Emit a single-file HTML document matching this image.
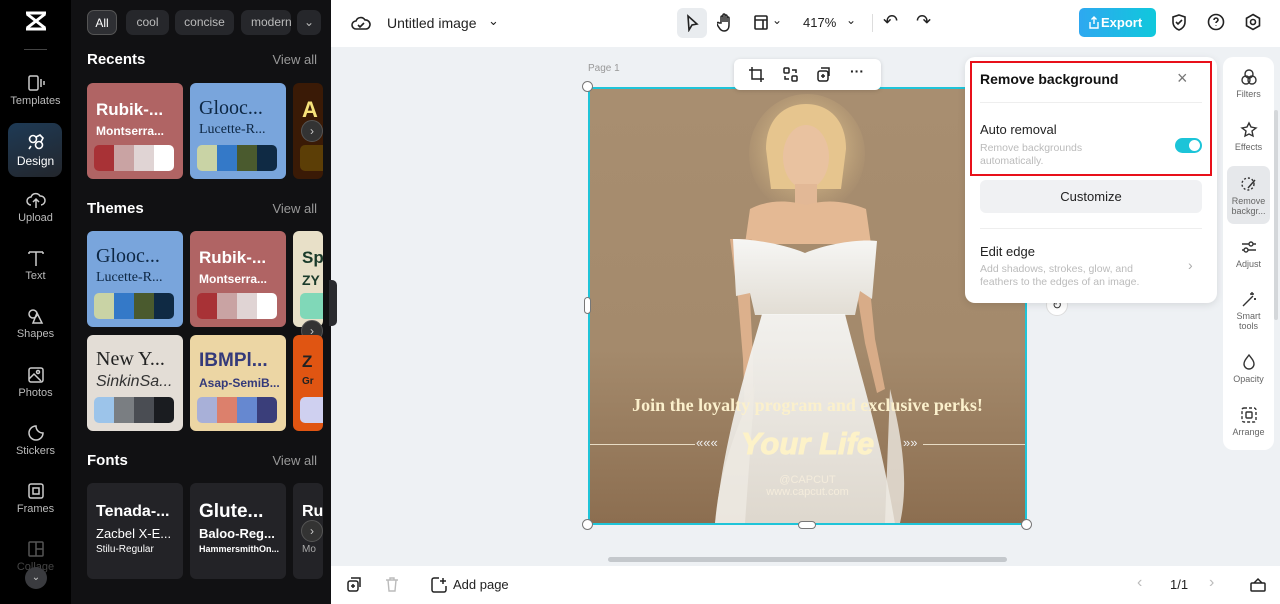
<!DOCTYPE html>
<html><head><meta charset="utf-8"><style>
*{box-sizing:border-box;margin:0;padding:0}
body{width:1280px;height:604px;overflow:hidden;font-family:"Liberation Sans",sans-serif;background:#eef1f4;position:relative}
.abs{position:absolute}
.rail{left:0;top:0;width:71px;height:604px;background:#000}
.ri{position:absolute;left:0;width:71px;text-align:center;color:#bbb;font-size:11px}
.ri svg{display:block;margin:0 auto 3px}
.panel{left:71px;top:0;width:260px;height:604px;background:#111113;color:#fff;overflow:hidden}
.chip{position:absolute;top:10px;height:25px;border-radius:7px;background:#26272b;color:#bbb;font-size:12px;line-height:25px;text-align:center}
.h{position:absolute;left:16px;font-weight:bold;font-size:15px}
.va{position:absolute;right:14px;color:#999;font-size:13px}
.card{position:absolute;width:96px;height:96px;border-radius:6px;overflow:hidden}
.card .t1{position:absolute;left:9px;top:17px;font-size:17px;font-weight:bold;white-space:nowrap}
.card .t2{position:absolute;left:9px;top:41px;font-size:12px;white-space:nowrap}
.sw{position:absolute;left:7px;top:62px;width:80px;height:26px;border-radius:5px;overflow:hidden;display:flex}
.sw i{flex:1}
.arr{position:absolute;width:22px;height:22px;border-radius:50%;background:#333;border:1px solid #555;color:#ccc;font-size:12px;text-align:center;line-height:20px}
.top{left:331px;top:0;width:949px;height:47px;background:#fff}
.bot{left:331px;top:566px;width:949px;height:38px;background:#fff}
.rtool{left:1223px;top:57px;width:51px;height:393px;background:#fff;border-radius:10px}
.rt{position:absolute;left:0;width:51px;text-align:center;font-size:9px;color:#666;line-height:10px}
.rt svg{display:block;margin:0 auto 3px}
</style></head><body>
<div class="abs rail">
 <svg class="abs" style="left:24px;top:11px" width="24" height="20" viewBox="0 0 24 20"><path d="M2 2 L22 2 M2 18 L22 18 M3 3 L21 17 M21 3 L3 17" stroke="#fff" stroke-width="3" fill="none"/></svg>
 <div class="abs" style="left:24px;top:49px;width:23px;height:1px;background:#444"></div>
 <div class="ri" style="top:74px"><svg width="18" height="18" viewBox="0 0 18 18" fill="none" stroke="#ccc" stroke-width="1.5"><rect x="2" y="2" width="9" height="14" rx="1.5"/><path d="M14 5v8M17 7v4"/></svg>Templates</div>
 <div class="abs" style="left:8px;top:123px;width:54px;height:54px;border-radius:9px;background:linear-gradient(160deg,#1e3a55,#23262c)"></div>
 <div class="ri" style="top:133px;color:#fff;font-size:12px"><svg width="18" height="18" viewBox="0 0 18 18" fill="none" stroke="#fff" stroke-width="1.6"><circle cx="6" cy="6" r="3.5"/><circle cx="12" cy="12" r="3.5"/><path d="M9 4l4-2 3 3-2 4M4 13l-2 3"/></svg>Design</div>
 <div class="ri" style="top:191px"><svg width="20" height="18" viewBox="0 0 20 18" fill="none" stroke="#ccc" stroke-width="1.5"><path d="M5 14a4 4 0 010-8 5 5 0 019-1 4 4 0 011 9M10 9v8M7 11l3-3 3 3"/></svg>Upload</div>
 <div class="ri" style="top:249px"><svg width="18" height="18" viewBox="0 0 18 18" fill="none" stroke="#ccc" stroke-width="1.5"><path d="M2 3h14M9 3v14M2 3v2M16 3v2"/></svg>Text</div>
 <div class="ri" style="top:307px"><svg width="18" height="18" viewBox="0 0 18 18" fill="none" stroke="#ccc" stroke-width="1.5"><circle cx="6" cy="7" r="4"/><path d="M10 6l5 10H6z"/></svg>Shapes</div>
 <div class="ri" style="top:366px"><svg width="18" height="18" viewBox="0 0 18 18" fill="none" stroke="#ccc" stroke-width="1.5"><rect x="2" y="2" width="14" height="14" rx="2"/><circle cx="11" cy="6" r="1.5"/><path d="M2 13l5-5 7 7"/></svg>Photos</div>
 <div class="ri" style="top:424px"><svg width="18" height="18" viewBox="0 0 18 18" fill="none" stroke="#ccc" stroke-width="1.5"><path d="M16 9a7 7 0 11-7-7c0 4 3 7 7 7z"/></svg>Stickers</div>
 <div class="ri" style="top:482px"><svg width="18" height="18" viewBox="0 0 18 18" fill="none" stroke="#ccc" stroke-width="1.5"><rect x="2" y="2" width="14" height="14" rx="2"/><rect x="6" y="6" width="6" height="6"/></svg>Frames</div>
 <div class="ri" style="top:540px;color:#444"><svg width="18" height="18" viewBox="0 0 18 18" fill="none" stroke="#555" stroke-width="1.5"><rect x="2" y="2" width="14" height="14" rx="1"/><path d="M9 2v14M9 9h7"/></svg>Collage</div>
 <div class="abs" style="left:25px;top:567px;width:22px;height:22px;border-radius:50%;background:#3a3b3f;color:#ccc;font-size:10px;text-align:center;line-height:22px">⌄</div>
</div>
<div class="abs panel">
 <div class="chip" style="left:16px;width:30px;background:#2e2f33;border:1px solid #555;color:#fff">All</div>
 <div class="chip" style="left:55px;width:43px">cool</div>
 <div class="chip" style="left:104px;width:59px">concise</div>
 <div class="chip" style="left:170px;width:50px;text-align:left;padding-left:10px;overflow:hidden">modern</div>
 <div class="chip" style="left:226px;width:24px">⌄</div>
 <div class="h" style="top:51px">Recents</div><div class="va" style="top:52px">View all</div>
 <div class="card" style="left:16px;top:83px;background:#b06464"><div class="t1">Rubik-...</div><div class="t2" style="font-weight:bold">Montserra...</div><div class="sw"><i style="background:#a83236"></i><i style="background:#c9a3a3"></i><i style="background:#e0d4d4"></i><i style="background:#fff"></i></div></div>
 <div class="card" style="left:119px;top:83px;background:#79a5dc;color:#0d2744"><div class="t1" style="font-family:'Liberation Serif',serif;font-weight:normal;font-size:20px;top:14px">Glooc...</div><div class="t2" style="font-family:'Liberation Serif',serif;font-size:14px;top:39px">Lucette-R...</div><div class="sw"><i style="background:#c9d3a5"></i><i style="background:#3479c8"></i><i style="background:#4a5a2e"></i><i style="background:#0f2a44"></i></div></div>
 <div class="card" style="left:222px;top:83px;width:30px;background:#3a1a06"><div class="t1" style="color:#f7e27a;font-size:22px;top:14px">A</div><div class="sw" style="background:#5c3e06"></div></div>
 <div class="arr" style="left:230px;top:120px">›</div>
 <div class="h" style="top:200px">Themes</div><div class="va" style="top:201px">View all</div>
 <div class="card" style="left:16px;top:231px;background:#79a5dc;color:#0d2744"><div class="t1" style="font-family:'Liberation Serif',serif;font-weight:normal;font-size:20px;top:14px">Glooc...</div><div class="t2" style="font-family:'Liberation Serif',serif;font-size:14px;top:39px">Lucette-R...</div><div class="sw"><i style="background:#c9d3a5"></i><i style="background:#3479c8"></i><i style="background:#4a5a2e"></i><i style="background:#0f2a44"></i></div></div>
 <div class="card" style="left:119px;top:231px;background:#b06464"><div class="t1">Rubik-...</div><div class="t2" style="font-weight:bold">Montserra...</div><div class="sw"><i style="background:#a83236"></i><i style="background:#c9a3a3"></i><i style="background:#e0d4d4"></i><i style="background:#fff"></i></div></div>
 <div class="card" style="left:222px;top:231px;width:30px;background:#e8e0c8;color:#1a3a2a"><div class="t1" style="top:17px">Sp</div><div class="t2" style="font-weight:bold;font-size:14px">ZY</div><div class="sw" style="background:#80d8b8"></div></div>
 <div class="arr" style="left:230px;top:320px">›</div>
 <div class="card" style="left:16px;top:335px;background:#e3ddd6;color:#222"><div class="t1" style="font-family:'Liberation Serif',serif;font-weight:normal;font-size:20px;top:13px">New Y...</div><div class="t2" style="font-style:italic;font-size:16px;top:38px;color:#333">SinkinSa...</div><div class="sw"><i style="background:#9cc4ea"></i><i style="background:#7a7e82"></i><i style="background:#4a4d53"></i><i style="background:#1a1c20"></i></div></div>
 <div class="card" style="left:119px;top:335px;background:#ecd6a4;color:#343a7a"><div class="t1" style="font-size:19px;top:15px">IBMPl...</div><div class="t2" style="font-weight:bold">Asap-SemiB...</div><div class="sw"><i style="background:#a8b0d8"></i><i style="background:#dc806c"></i><i style="background:#6688d0"></i><i style="background:#3a3e7a"></i></div></div>
 <div class="card" style="left:222px;top:335px;width:30px;background:#e05512;color:#222"><div class="t1">Z</div><div class="t2" style="font-size:10px;font-weight:bold">Gr</div><div class="sw" style="background:#cfd0f0"></div></div>
 <div class="h" style="top:452px">Fonts</div><div class="va" style="top:453px">View all</div>
 <div class="card" style="left:16px;top:483px;height:96px;background:#232327"><div class="t1" style="top:20px;font-size:16px">Tenada-...</div><div class="t2" style="top:43px;font-size:13px">Zacbel X-E...</div><div class="t2" style="top:61px;font-size:10px">Stilu-Regular</div></div>
 <div class="card" style="left:119px;top:483px;height:96px;background:#232327"><div class="t1" style="top:18px;font-size:19px">Glute...</div><div class="t2" style="top:43px;font-weight:bold;font-size:13px">Baloo-Reg...</div><div class="t2" style="top:61px;font-size:9px;font-weight:bold">HammersmithOn...</div></div>
 <div class="card" style="left:222px;top:483px;width:30px;background:#232327"><div class="t1" style="top:20px;font-size:16px">Ru</div><div class="t2" style="top:61px;font-size:10px;color:#aaa">Mo</div></div>
 <div class="arr" style="left:230px;top:520px">›</div>
</div>
<div class="abs" style="left:329px;top:280px;width:8px;height:46px;background:#2a2b2f;border-radius:0 5px 5px 0"></div>
<div class="abs top">
 <svg class="abs" style="left:20px;top:14px" width="20" height="18" viewBox="0 0 20 18" fill="none" stroke="#222" stroke-width="1.6"><path d="M5 15a4 4 0 010-8 5 5 0 019-1 4 4 0 011 9z M7 11l2 2 4-4"/></svg>
 <div class="abs" style="left:56px;top:15px;font-size:14px;color:#222">Untitled image</div>
 <div class="abs" style="left:157px;top:13px;font-size:13px;color:#222">⌄</div>
 <div class="abs" style="left:346px;top:8px;width:30px;height:30px;background:#e9ecef;border-radius:6px"></div>
 <svg class="abs" style="left:353px;top:14px" width="16" height="18" viewBox="0 0 16 18" fill="none" stroke="#222" stroke-width="1.6"><path d="M4 2l9 8-5 1-3 5z"/></svg>
 <svg class="abs" style="left:386px;top:13px" width="16" height="19" viewBox="0 0 16 19" fill="none" stroke="#222" stroke-width="1.5"><path d="M4 10V4a1 1 0 012 0v5V2a1 1 0 012 0v7V3a1 1 0 012 0v6V5a1 1 0 012 0v7c0 4-2 6-5 6s-4-2-6-5l-1-2a1 1 0 012-1z"/></svg>
 <svg class="abs" style="left:422px;top:14px" width="16" height="17" viewBox="0 0 16 17" fill="none" stroke="#222" stroke-width="1.6"><rect x="2" y="2" width="12" height="13" rx="1"/><path d="M2 6h12M10 6v9"/></svg>
 <div class="abs" style="left:441px;top:13px;font-size:12px;color:#222">⌄</div>
 <div class="abs" style="left:472px;top:15px;font-size:13px;color:#222">417%</div>
 <div class="abs" style="left:515px;top:13px;font-size:12px;color:#222">⌄</div>
 <div class="abs" style="left:541px;top:14px;width:1px;height:18px;background:#ddd"></div>
 <div class="abs" style="left:552px;top:11px;font-size:18px;color:#222">↶</div>
 <div class="abs" style="left:585px;top:11px;font-size:18px;color:#222">↷</div>
 <div class="abs" style="left:748px;top:8px;width:77px;height:29px;border-radius:5px;background:linear-gradient(90deg,#2ea8f0,#10c8dc);color:#fff;font-weight:bold;font-size:13px;line-height:29px;padding-left:22px">Export</div>
 <svg class="abs" style="left:757px;top:15px" width="12" height="14" viewBox="0 0 12 14" fill="none" stroke="#fff" stroke-width="1.4"><path d="M2 7v6h8V7M6 9V2M3.5 4.5L6 2l2.5 2.5"/></svg>
 <svg class="abs" style="left:840px;top:13px" width="16" height="19" viewBox="0 0 16 19" fill="none" stroke="#222" stroke-width="1.6"><path d="M8 2l6 2v5c0 4-3 7-6 8-3-1-6-4-6-8V4z M5 9l2 2 4-4"/></svg>
 <svg class="abs" style="left:876px;top:13px" width="18" height="18" viewBox="0 0 18 18" fill="none" stroke="#222" stroke-width="1.6"><circle cx="9" cy="9" r="7.5"/><path d="M7 7a2 2 0 114 0c0 1.5-2 1.5-2 3M9 12.5v.5"/></svg>
 <svg class="abs" style="left:913px;top:13px" width="18" height="18" viewBox="0 0 18 18" fill="none" stroke="#222" stroke-width="1.6"><path d="M9 1.5l6.5 3.75v7.5L9 16.5l-6.5-3.75v-7.5z"/><circle cx="9" cy="9" r="2.5"/></svg>
</div>
<!-- canvas -->
<div class="abs" style="left:588px;top:63px;font-size:10px;color:#999">Page 1</div>
<div class="abs" style="left:588px;top:87px;width:439px;height:438px;background:linear-gradient(180deg,#a88e70 0%,#a48a6c 60%,#8c6e50 100%);border:2px solid #1fc4d8;overflow:hidden">
 <svg class="abs" style="left:0;top:0" width="435" height="434" viewBox="0 0 435 434">
  <defs>
   <radialGradient id="hair" cx="50%" cy="45%" r="55%"><stop offset="0" stop-color="#f4dcaa"/><stop offset="1" stop-color="#d8b880" stop-opacity="0"/></radialGradient>
   <linearGradient id="dress" x1="0" y1="0" x2="0" y2="1"><stop offset="0" stop-color="#f6f6f4"/><stop offset="1" stop-color="#e2ddd4"/></linearGradient>
  </defs>
  <ellipse cx="217" cy="65" rx="58" ry="60" fill="url(#hair)"/>
  <path d="M176 60c0-30 18-45 40-45s40 15 40 45l-5 40-70 0z" fill="#e6c58e"/>
  <ellipse cx="216" cy="68" rx="23" ry="32" fill="#e9c2a0"/>
  <path d="M205 95l0 25h22l0-25z" fill="#e2b896"/>
  <path d="M160 120c15-8 35-10 56-4 20-6 40-4 60 4l5 35-126 0z" fill="#e4b994"/>
  <path d="M140 150l8 60 5 60 2 60 8 0 0-60 -3-60 2-60z" fill="#dcb08c"/>
  <path d="M272 150l8 50 5 50 10 50 -8 4 -12-50 -8-50z" fill="#d8ac88"/>
  <path d="M143 150c20 0 50 5 72 14 22-9 52-14 72-12l-5 58-12-8 -5 24 -100 0 -5-22 -14 3z" fill="url(#dress)"/>
  <path d="M172 225l83 0c15 60 35 120 50 210l-180 0c10-90 30-150 47-210z" fill="url(#dress)" opacity="0.95"/>
  <path d="M125 434c5-60 25-100 40-140l-10 140z M300 300c10 40 20 90 10 134l-15 0z" fill="#eeeae2" opacity="0.8"/>
 </svg>
 <div class="abs" style="left:0;top:306px;width:435px;text-align:center;font-family:'Liberation Serif',serif;font-weight:bold;font-size:18px;color:#fbf0cc">Join the loyalty program and exclusive perks!</div>
 <div class="abs" style="left:0;top:355px;width:105px;height:1px;background:#e8dcc4"></div>
 <div class="abs" style="left:333px;top:355px;width:102px;height:1px;background:#e8dcc4"></div>
 <div class="abs" style="left:106px;top:346px;font-size:13px;color:#eee">«««</div>
 <div class="abs" style="left:313px;top:346px;font-size:13px;color:#eee">»»</div>
 <div class="abs" style="left:0;top:337px;width:435px;text-align:center;font-style:italic;font-weight:bold;font-size:31px;color:#fdf2c8;-webkit-text-stroke:1px #fdf2c8">Your Life</div>
 <div class="abs" style="left:0;top:385px;width:435px;text-align:center;font-size:11px;color:#f4ecdc;line-height:12px">@CAPCUT<br>www.capcut.com</div>
</div>
<div class="abs" style="left:582px;top:81px;width:11px;height:11px;border-radius:50%;background:#fff;border:1px solid #777"></div>
<div class="abs" style="left:582px;top:519px;width:11px;height:11px;border-radius:50%;background:#fff;border:1px solid #777"></div>
<div class="abs" style="left:1021px;top:519px;width:11px;height:11px;border-radius:50%;background:#fff;border:1px solid #777"></div>
<div class="abs" style="left:584px;top:297px;width:7px;height:17px;border-radius:4px;background:#fff;border:1px solid #777"></div>
<div class="abs" style="left:798px;top:521px;width:18px;height:8px;border-radius:4px;background:#fff;border:1px solid #777"></div>
<div class="abs" style="left:1046px;top:294px;width:22px;height:22px;border-radius:50%;background:#fff;border:1px solid #ddd;font-size:12px;text-align:center;line-height:20px;color:#333">↻</div>
<div class="abs" style="left:734px;top:59px;width:147px;height:31px;background:#fff;border-radius:6px;box-shadow:0 1px 4px rgba(0,0,0,.15)">
 <svg class="abs" style="left:15px;top:8px" width="15" height="15" viewBox="0 0 15 15" fill="none" stroke="#222" stroke-width="1.5"><path d="M3 0v12h12M0 3h12v12"/></svg>
 <svg class="abs" style="left:49px;top:8px" width="15" height="15" viewBox="0 0 15 15" fill="none" stroke="#222" stroke-width="1.5"><rect x="1" y="1" width="5" height="5" rx="1"/><rect x="9" y="9" width="5" height="5" rx="1"/><path d="M9 3h4v3M6 12H2V9"/></svg>
 <svg class="abs" style="left:82px;top:8px" width="15" height="15" viewBox="0 0 15 15" fill="none" stroke="#222" stroke-width="1.5"><rect x="2" y="4" width="10" height="10" rx="2"/><path d="M5 1h8v8M7 7v4M5 9h4"/></svg>
 <div class="abs" style="left:116px;top:4px;font-size:14px;font-weight:bold;color:#222">···</div>
</div>
<div class="abs" style="left:608px;top:557px;width:399px;height:5px;border-radius:3px;background:#c4c8cc"></div>
<div class="abs" style="left:1274px;top:110px;width:4px;height:210px;border-radius:2px;background:#d4d7da"></div>
<div class="abs" style="left:965px;top:57px;width:252px;height:246px;background:#fff;border-radius:10px;box-shadow:0 2px 8px rgba(0,0,0,.1)">
 <div class="abs" style="left:15px;top:14px;font-size:14px;font-weight:bold;color:#111">Remove background</div>
 <div class="abs" style="left:212px;top:11px;font-size:18px;color:#777">×</div>
 <div class="abs" style="left:15px;top:45px;width:222px;height:1px;background:#eee"></div>
 <div class="abs" style="left:15px;top:65px;font-size:13px;color:#222">Auto removal</div>
 <div class="abs" style="left:15px;top:85px;font-size:10.5px;color:#bbb;line-height:13px">Remove backgrounds<br>automatically.</div>
 <div class="abs" style="left:210px;top:81px;width:27px;height:15px;border-radius:8px;background:#1cc4d8"><div class="abs" style="left:14px;top:2px;width:11px;height:11px;border-radius:50%;background:#fff"></div></div>
 <div class="abs" style="left:15px;top:123px;width:222px;height:33px;border-radius:6px;background:#f0f1f3;text-align:center;line-height:33px;font-size:13px;color:#222">Customize</div>
 <div class="abs" style="left:15px;top:171px;width:222px;height:1px;background:#eee"></div>
 <div class="abs" style="left:15px;top:187px;font-size:13px;color:#222">Edit edge</div>
 <div class="abs" style="left:15px;top:206px;font-size:10.5px;color:#bbb;line-height:13px">Add shadows, strokes, glow, and<br>feathers to the edges of an image.</div>
 <div class="abs" style="left:223px;top:200px;font-size:14px;color:#aaa">›</div>
</div>
<div class="abs" style="left:970px;top:61px;width:242px;height:115px;border:2px solid #e8101a"></div>
<div class="abs rtool">
 <div class="rt" style="top:11px"><svg width="18" height="18" viewBox="0 0 18 18" fill="none" stroke="#333" stroke-width="1.4"><circle cx="9" cy="6" r="4"/><circle cx="6" cy="12" r="4"/><circle cx="12" cy="12" r="4"/></svg>Filters</div>
 <div class="rt" style="top:64px"><svg width="18" height="18" viewBox="0 0 18 18" fill="none" stroke="#333" stroke-width="1.4"><path d="M9 2l2 4 5 1-4 3 1 5-4-2-4 2 1-5-4-3 5-1z"/></svg>Effects</div>
 <div class="abs" style="left:4px;top:109px;width:43px;height:58px;border-radius:7px;background:#e6e8eb"></div>
 <div class="rt" style="top:118px"><svg width="18" height="18" viewBox="0 0 18 18" fill="none" stroke="#333" stroke-width="1.4"><circle cx="8" cy="9" r="6" stroke-dasharray="2 2"/><path d="M8 13l7-8"/></svg>Remove<br>backgr...</div>
 <div class="rt" style="top:181px"><svg width="18" height="18" viewBox="0 0 18 18" fill="none" stroke="#333" stroke-width="1.4"><path d="M2 6h14M2 12h14"/><circle cx="11" cy="6" r="2" fill="#fff"/><circle cx="6" cy="12" r="2" fill="#fff"/></svg>Adjust</div>
 <div class="rt" style="top:233px"><svg width="18" height="18" viewBox="0 0 18 18" fill="none" stroke="#333" stroke-width="1.4"><path d="M3 16l10-10M12 2v3M10 4h4M15 8v2M14 9h2"/></svg>Smart<br>tools</div>
 <div class="rt" style="top:296px"><svg width="18" height="18" viewBox="0 0 18 18" fill="none" stroke="#333" stroke-width="1.4"><path d="M9 2c3 4 5 6 5 9a5 5 0 01-10 0c0-3 2-5 5-9z"/></svg>Opacity</div>
 <div class="rt" style="top:349px"><svg width="18" height="18" viewBox="0 0 18 18" fill="none" stroke="#333" stroke-width="1.4"><rect x="2" y="2" width="14" height="14" rx="2" stroke-dasharray="3 2"/><rect x="6" y="6" width="6" height="6" rx="1"/></svg>Arrange</div>
</div>
<div class="abs bot">
 <svg class="abs" style="left:16px;top:11px" width="15" height="15" viewBox="0 0 15 15" fill="none" stroke="#222" stroke-width="1.5"><rect x="1" y="4" width="10" height="10" rx="2"/><path d="M4 1h9v9M6 7v4M4 9h4"/></svg>
 <svg class="abs" style="left:54px;top:11px" width="14" height="15" viewBox="0 0 14 15" fill="none" stroke="#bbb" stroke-width="1.4"><path d="M1 3h12M5 3V1h4v2M3 3l1 11h6l1-11"/></svg>
 <svg class="abs" style="left:100px;top:11px" width="16" height="16" viewBox="0 0 16 16" fill="none" stroke="#222" stroke-width="1.5"><path d="M8 1H3a2 2 0 00-2 2v10a2 2 0 002 2h10a2 2 0 002-2V9M12 1v6M9 4h6"/></svg>
 <div class="abs" style="left:122px;top:11px;font-size:13px;color:#222">Add page</div>
 <div class="abs" style="left:806px;top:8px;font-size:16px;color:#bbb">‹</div>
 <div class="abs" style="left:839px;top:11px;font-size:13px;color:#222">1/1</div>
 <div class="abs" style="left:878px;top:8px;font-size:16px;color:#bbb">›</div>
 <svg class="abs" style="left:919px;top:11px" width="16" height="15" viewBox="0 0 16 15" fill="none" stroke="#222" stroke-width="1.5"><rect x="1" y="6" width="14" height="8" rx="1"/><path d="M4 6l4-4 4 4"/></svg>
</div>
</body></html>
